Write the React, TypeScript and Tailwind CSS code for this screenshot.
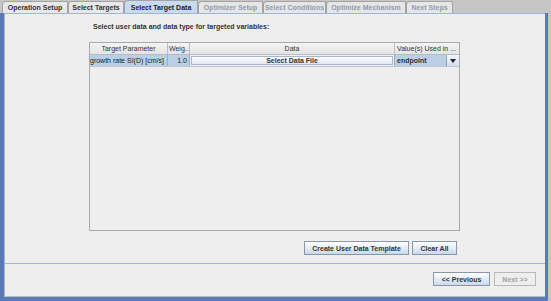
import React from 'react'

const tabs = [
  { label: 'Operation Setup', w: 'w-[66px]', state: 'normal' },
  { label: 'Select Targets', w: 'w-[56px]', state: 'normal' },
  { label: 'Select Target Data', w: 'w-[74px]', state: 'active' },
  { label: 'Optimizer Setup', w: 'w-[65px]', state: 'disabled' },
  { label: 'Select Conditions', w: 'w-[63px]', state: 'disabled' },
  { label: 'Optimize Mechanism', w: 'w-[80px]', state: 'disabled' },
  { label: 'Next Steps', w: 'w-[47px]', state: 'disabled' },
]

function Tab({ label, w, state }: { label: string; w: string; state: string }) {
  const base = `${w} h-[12px] flex items-center justify-center border-t border-r border-l border-[#a3a3a3] rounded-tl-[4px] text-[7px] font-bold leading-none whitespace-nowrap`
  if (state === 'active') {
    return <div className={`${base} bg-[#c8daf0] text-[#222] h-[13px]`}>{label}</div>
  }
  if (state === 'disabled') {
    return <div className={`${base} bg-[#e6e6e6] text-[#8d9cb0]`}>{label}</div>
  }
  return <div className={`${base} bg-[#e8e8e8] text-[#333]`}>{label}</div>
}

function MetalButton({ label, w, disabled }: { label: string; w: string; disabled?: boolean }) {
  return (
    <div
      className={`${w} h-[14px] flex items-center justify-center border text-[7px] font-bold leading-none whitespace-nowrap ${
        disabled
          ? 'border-[#b8b8b8] bg-[#eeeeee] text-[#a0a0a0]'
          : 'border-[#8b96a6] bg-gradient-to-b from-[#ffffff] to-[#c9d9ee] text-[#333]'
      }`}
    >
      {label}
    </div>
  )
}

export default function App() {
  return (
    <div className="w-[551px] h-[301px] bg-[#c6c6c6] flex flex-col font-['Liberation_Sans',Arial,sans-serif]">
      <div className="h-[13px] flex items-end pl-[2px] gap-0">
        {tabs.map((t) => (
          <Tab key={t.label} {...t} />
        ))}
      </div>
      <div className="flex-1 flex pr-[3px]">
        <div className="flex-1 flex flex-col border-l-4 border-r-[3px] border-b-4 border-[#5a79b8]">
          <div className="flex-1 flex flex-col border-t border-l border-[#9db6de] border-b-[#b9bfc7] border-b bg-[#eeeeee]">
            <div className="pl-[84px] pt-[8px] flex flex-col">
              <div className="h-[9px] flex items-center pl-[4px] text-[7px] font-bold text-[#333] leading-none">
                Select user data and data type for targeted variables:
              </div>
              <div className="mt-[11px] w-[371px] h-[189px] border border-[#a6a9ae] bg-[#eeeeee] flex flex-col">
                <div className="h-[12px] flex text-[7px] text-[#333] leading-none border-b border-[#b8bcc2] bg-gradient-to-b from-[#f4f4f4] to-[#e4e4e4]">
                  <div className="w-[78px] flex items-center justify-center border-r border-[#b8bcc2] whitespace-nowrap">Target Parameter</div>
                  <div className="w-[22px] flex items-center pl-[1px] border-r border-[#b8bcc2] overflow-hidden whitespace-nowrap">Weig...</div>
                  <div className="w-[205px] flex items-center justify-center border-r border-[#b8bcc2]">Data</div>
                  <div className="flex-1 flex items-center pl-[2px] whitespace-nowrap">Value(s) Used in ...</div>
                </div>
                <div className="h-[12px] flex text-[7px] text-[#222] leading-none border-b border-[#c3c6ca]">
                  <div className="w-[78px] flex items-center bg-[#b8cfe5] border-r border-[#a6a9ae] whitespace-nowrap">
                    growth rate SI(D) [cm/s]
                  </div>
                  <div className="w-[22px] flex items-center justify-end pr-[2px] bg-[#b8cfe5] border-r border-[#a6a9ae]">1.0</div>
                  <div className="w-[205px] flex items-stretch p-[1px] border-r border-[#a6a9ae] bg-[#eef2f8]">
                    <div className="flex-1 flex items-center justify-center border border-[#a9b6c8] bg-gradient-to-b from-[#ffffff] to-[#dce6f3] font-bold text-[7px] text-[#333]">
                      Select Data File
                    </div>
                  </div>
                  <div className="flex-1 flex items-center bg-[#b8cfe5]">
                    <span className="flex-1 pl-[2px] font-bold text-[7px] text-[#333]">endpoint</span>
                    <div className="w-[13px] h-full flex items-center justify-center border-l border-[#8ea4c0] bg-gradient-to-b from-[#f4f7fb] to-[#d2deec]">
                      <svg width="6" height="4" viewBox="0 0 6 4">
                        <path d="M0 0 H6 L3 4 Z" fill="#222" />
                      </svg>
                    </div>
                  </div>
                </div>
              </div>
              <div className="w-[371px] mt-[10px] flex justify-end gap-[3px] pr-[3px]">
                <MetalButton label="Create User Data Template" w="w-[105px]" />
                <MetalButton label="Clear All" w="w-[45px]" />
              </div>
            </div>
            <div className="flex-1" />
            <div className="h-px bg-[#9ab4dc]" />
            <div className="h-[32px] flex justify-end items-start pt-[8px] pr-[9px] gap-[4px]">
              <MetalButton label="<< Previous" w="w-[57px]" />
              <MetalButton label="Next >>" w="w-[42px]" disabled />
            </div>
          </div>
        </div>
      </div>
    </div>
  )
}
